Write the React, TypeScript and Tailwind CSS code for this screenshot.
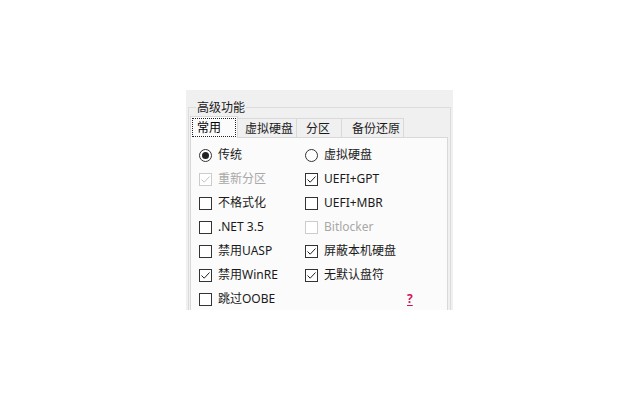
import { ReactNode } from 'react';

const font = { fontFamily: '"Noto Sans", "Noto Sans CJK SC", sans-serif' };

const Check = ({ checked, disabled }: { checked?: boolean; disabled?: boolean }) => (
  <span
    className={`w-[13px] h-[13px] border flex items-center justify-center bg-white ${
      disabled ? 'border-[#cccccc]' : 'border-[#333333]'
    }`}
  >
    {checked && (
      <svg width="11" height="11" viewBox="0 0 11 11">
        <path
          d="M1.5 5.5 L4.2 8.2 L9.5 2.5"
          fill="none"
          stroke={disabled ? '#c4c4c4' : '#222'}
          strokeWidth="1"
        />
      </svg>
    )}
  </span>
);

const Radio = ({ checked }: { checked?: boolean }) => (
  <span className="w-[13px] h-[13px] rounded-full border border-[#333333] bg-white flex items-center justify-center">
    {checked && <span className="w-[7px] h-[7px] rounded-full bg-[#222]" />}
  </span>
);

const Row = ({ icon, label, disabled }: { icon: ReactNode; label: string; disabled?: boolean }) => (
  <div className={`flex items-center gap-[6px] h-[24px] ${disabled ? 'text-[#a8a8a8]' : 'text-[#1a1a1a]'}`}>
    {icon}
    <span>{label}</span>
  </div>
);

export default function App() {
  const tabs = ['虚拟硬盘', '分区', '备份还原'];
  const tabW = ['w-[59px] pl-[7px]', 'w-[45px] pl-[9px]', 'w-[62px] pl-[10px]'];

  return (
    <div className="w-[640px] h-[400px] bg-white overflow-hidden text-[12px]" style={font}>
      <div className="pt-[90px] pl-[186px]">
        <div className="w-[267px] h-[220px] bg-[#f0f0f0] overflow-hidden relative">
          {/* group box */}
          <div className="absolute left-[2px] top-[17px] w-[263px] h-[220px] border border-[#dcdcdc]" />
          <div className="relative pl-[10px] pt-[10px] leading-[16px] h-[27px]">
            <span className="bg-[#f0f0f0] px-[1px] text-[#1a1a1a]">高级功能</span>
          </div>
          <div className="relative pl-[4px] flex items-end h-[21px]">
            <div className="w-[48px] h-[22px] bg-[#fbfbfb] border border-b-0 border-[#d9d9d9] flex items-center justify-center relative z-10">
              <span className="border border-dotted border-[#222] w-[44px] h-[19px] flex items-center pl-[4px] leading-none">
                常用
              </span>
            </div>
            {tabs.map((t, i) => (
              <div
                key={t}
                className={`${tabW[i]} h-[20px] border border-l-0 border-b-0 border-[#d9d9d9] bg-[#f0f0f0] flex items-center leading-none text-[#1a1a1a]`}
              >
                {t}
              </div>
            ))}
          </div>
          <div className="relative ml-[4px] w-[258px] h-[200px] bg-[#fbfbfb] border border-[#d9d9d9] -mt-px pl-[8px] pt-[5px]">
            <div className="flex">
              <div className="w-[106px]">
                <Row icon={<Radio checked />} label="传统" />
                <Row icon={<Check checked disabled />} label="重新分区" disabled />
                <Row icon={<Check />} label="不格式化" />
                <Row icon={<Check />} label=".NET 3.5" />
                <Row icon={<Check />} label="禁用UASP" />
                <Row icon={<Check checked />} label="禁用WinRE" />
                <Row icon={<Check />} label="跳过OOBE" />
              </div>
              <div className="w-[140px]">
                <Row icon={<Radio />} label="虚拟硬盘" />
                <Row icon={<Check checked />} label="UEFI+GPT" />
                <Row icon={<Check />} label="UEFI+MBR" />
                <Row icon={<Check disabled />} label="Bitlocker" disabled />
                <Row icon={<Check checked />} label="屏蔽本机硬盘" />
                <Row icon={<Check checked />} label="无默认盘符" />
                <div className="h-[24px] flex items-center pl-[101px]">
                  <span className="text-[#d4145a] font-bold underline underline-offset-2 px-[1px]">?</span>
                </div>
              </div>
            </div>
          </div>
        </div>
      </div>
    </div>
  );
}
